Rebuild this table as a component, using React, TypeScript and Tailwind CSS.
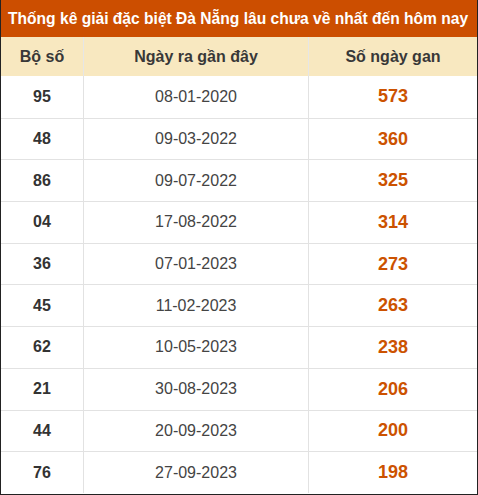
import React from "react";

const rows = [
  ["95", "08-01-2020", "573"],
  ["48", "09-03-2022", "360"],
  ["86", "09-07-2022", "325"],
  ["04", "17-08-2022", "314"],
  ["36", "07-01-2023", "273"],
  ["45", "11-02-2023", "263"],
  ["62", "10-05-2023", "238"],
  ["21", "30-08-2023", "206"],
  ["44", "20-09-2023", "200"],
  ["76", "27-09-2023", "198"],
];

export default function App() {
  return (
    <div className="w-[478px] h-[495px] bg-white border-x border-b border-[#222] overflow-hidden font-['Liberation_Sans',Arial,sans-serif] text-[#333]">
      <div className="h-[37px] bg-[#cc4e00] text-white font-bold text-[15.6px] flex items-center pl-[7px] whitespace-nowrap overflow-hidden">
        Thống kê giải đặc biệt Đà Nẵng lâu chưa về nhất đến hôm nay
      </div>
      <div className="grid grid-cols-[83px_225px_1fr] h-[39px] bg-[#f8e8c0] text-[16px] font-bold text-[#383838]">
        <div className="flex items-center justify-center border-r border-[#e6e6e6]">Bộ số</div>
        <div className="flex items-center justify-center border-r border-[#e6e6e6]">Ngày ra gần đây</div>
        <div className="flex items-center justify-center">Số ngày gan</div>
      </div>
      {rows.map(([a, b, c], i) => (
        <div
          key={a}
          className={`grid grid-cols-[83px_225px_1fr] h-[41.7px] ${i > 0 ? "border-t border-[#e2e2e2]" : ""}`}
        >
          <div className="flex items-center justify-center border-r border-[#e2e2e2] font-bold text-[16px] text-[#333]">{a}</div>
          <div className="flex items-center justify-center border-r border-[#e2e2e2] text-[16px] text-[#444]">{b}</div>
          <div className="flex items-center justify-center font-bold text-[18px] text-[#cc5200]">{c}</div>
        </div>
      ))}
    </div>
  );
}
